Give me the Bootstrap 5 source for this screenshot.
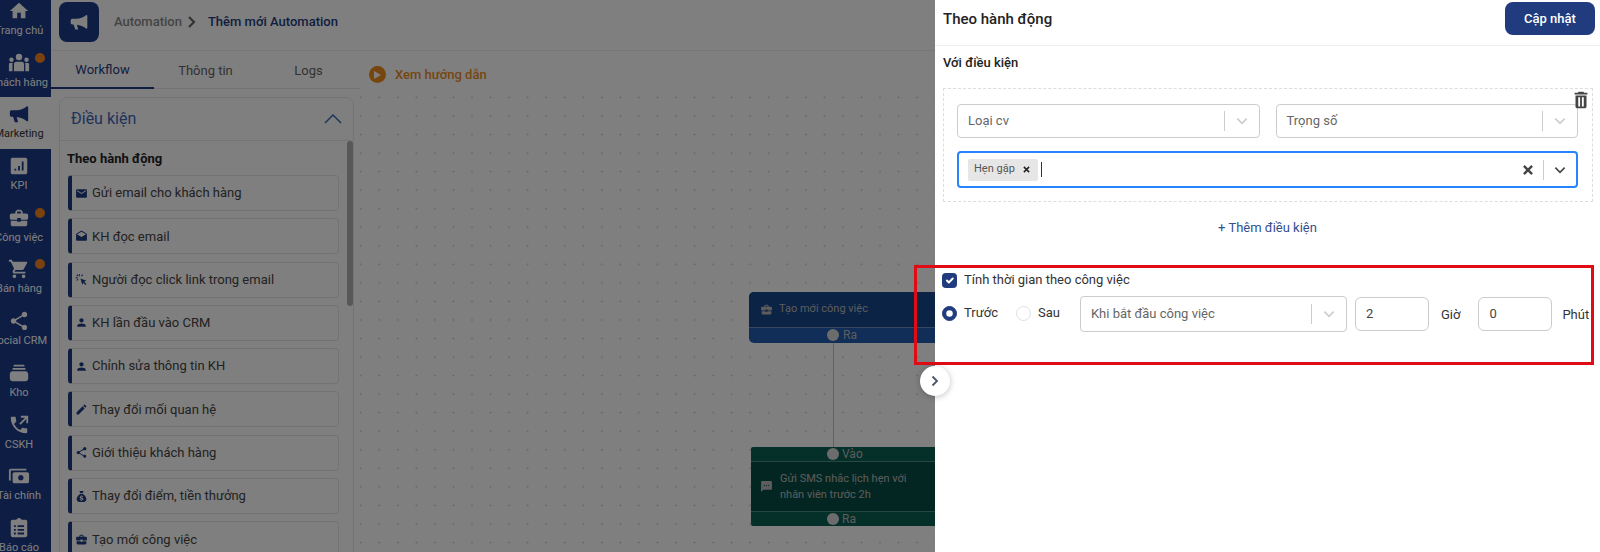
<!DOCTYPE html>
<html lang="vi">
<head>
    <meta charset="UTF-8">
    <meta name="viewport" content="width=device-width, initial-scale=1.0">
    <title>Thêm mới Automation</title>
    <link href="https://cdn.jsdelivr.net/npm/bootstrap@5.3.0/dist/css/bootstrap.min.css" rel="stylesheet">
    <style>
        body { font-family: Roboto, "Liberation Sans", sans-serif; font-size: 13px; color: #333; height: 552px; overflow: hidden; background: #fff; }
        svg.ico { fill: currentColor; display: block; flex: none; }
        .side-bar { width: 51px; flex: none; background: #1b3a88; color: #fff; overflow: hidden; }
        .side-list { margin-top: -6px; }
        .side-item { width: 51px; height: 51.7px; position: relative; padding: 6px 13px 0 0; font-size: 11px; line-height: 14px; white-space: nowrap; }
        .side-item svg { margin-bottom: 2px; }
        .side-box { width: 38px; display: flex; flex-direction: column; align-items: center; }
        .side-item.on { background: #fff; color: #1b3a88; }
        .side-item.on span { color: #333; }
        .side-dot { position: absolute; left: 35px; top: 7px; width: 10px; height: 10px; border-radius: 50%; background: #f5851f; }
        .top-head { height: 51px; border-bottom: 1px solid #eee; padding: 2px 0 0 8px; }
        .top-tile { width: 40px; height: 40px; border-radius: 8px; background: #1b3a88; color: #fff; }
        .crumb-a { color: #8a8a8a; font-weight: 500; margin-left: 15px; }
        .crumb-sep { margin: 0 11px 0 5px; }
        .crumb-b { color: #1f3c80; font-weight: 500; }
        .left-col { width: 309px; flex: none; }
        .tab-row { height: 38px; border-bottom: 1px solid #e6e6e6; }
        .tab-cell { width: 103px; height: 38px; display: flex; align-items: center; justify-content: center; color: #666; font-size: 13px; padding-top: 2px; }
        .tab-cell.on { color: #1f3c80; border-bottom: 2px solid #1f3c80; height: 38px; }
        .panel-box { width: 295px; height: 470px; margin: 8px 0 0 8px; border: 1px solid #e8e8e8; border-radius: 8px 8px 0 0; position: relative; overflow: hidden; }
        .panel-head { height: 43px; padding: 0 11px; border-bottom: 1px solid #e8e8e8; color: #3f66b8; font-size: 16px; }
        .panel-title { font-weight: 700; color: #222; margin: 10px 0 9px 7px; line-height: 15px; }
        .act-item { width: 271px; height: 36px; margin: 0 0 7.3px 8px; border: 1px solid #e6e6e6; border-left: 4px solid #1f3c80; border-radius: 4px; padding-left: 3px; gap: 4px; color: #444; }
        .act-item svg { color: #1f3c80; }
        .scroll-thumb { position: absolute; right: 0; top: 43px; width: 6px; height: 165px; background: #b0b0b0; border-radius: 3px; }
        .flow-canvas { position: relative; flex-grow: 1; height: 501px; padding-top: 40px; background-image: radial-gradient(circle, #c8c8c8 0.8px, transparent 1.1px); background-size: 18.55px 18.55px; background-position: 10px 0; background-clip: content-box; }
        .guide-row { position: absolute; left: 9px; top: 14px; color: #ee8c1e; font-weight: 500; gap: 9px; }
        .guide-dot { width: 17px; height: 17px; border-radius: 50%; background: #ee8c1e; }
        .flow-node { position: absolute; color: #bbb; overflow: hidden; font-size: 11px; }
        .node-one { left: 389px; top: 241px; width: 240px; height: 51px; background: #205cb0; border-radius: 5px; }
        .node-two { left: 391px; top: 396px; width: 240px; height: 79px; background: #0a6053; border-radius: 2px; }
        .node-body { background: #174688; height: 36px; padding-left: 11px; gap: 6px; border-bottom: 1px solid #6f8fc0; }
        .node-two .node-body { background: #084d44; height: 51px; padding-left: 9px; border-top: 1px solid #4f9085; border-bottom: 1px solid #4f9085; gap: 7px; line-height: 16px; }
        .node-foot { height: 14px; font-size: 12px; line-height: 14px; padding-left: 78px; gap: 4px; }
        .node-two .node-foot { padding-left: 76px; gap: 3px; }
        .node-pin { width: 12px; height: 12px; border-radius: 50%; background: #d8d8d8; flex: none; }
        .node-line { position: absolute; left: 473px; top: 291px; width: 1px; height: 105px; background: #c4c4c4; }
        .dim-layer { position: absolute; left: 0; top: 0; width: 935px; height: 552px; background: rgba(0,0,0,.5); }
        .right-drawer { position: absolute; left: 935px; top: 0; width: 665px; height: 552px; background: #fff; }
        .drawer-head { height: 46px; padding: 0 5px 10px 8px; border-bottom: 1px solid #eee; }
        .drawer-title { font-size: 15px; font-weight: 500; color: #222; margin-top: 10px; line-height: 18px; }
        .save-btn { width: 90px; height: 33px; margin-top: 2px; background: #203c7e; color: #fff; border-radius: 8px; font-size: 13px; font-weight: 500; padding: 0; border: 0; }
        .sub-title { font-weight: 500; color: #222; margin: 9px 0 0 8px; line-height: 15px; }
        .cond-box { margin: 18px 7px 0 8px; height: 114px; border: 1px dashed #ddd; padding: 15px 14px 0 13px; position: relative; }
        .trash-btn { position: absolute; right: 0; top: 0; color: #444; }
        .pick-box { height: 34px; border: 1px solid #ccc; border-radius: 4px; padding-left: 10px; color: #666; background: #fff; }
        .pick-half { flex: 1 1 0; }
        .pick-val { flex-grow: 1; }
        .pick-sep { width: 1px; height: 20px; background: #ccc; }
        .pick-arrow { width: 34px; display: flex; justify-content: center; color: #ccc; }
        .multi-box { height: 37px; margin-top: 13px; border: 2px solid #2684ff; border-radius: 4px; padding-left: 9px; }
        .multi-box .pick-arrow { width: 32px; color: #444; }
        .tag-chip { width: 70px; height: 22px; background: #e6e6e6; font-size: 11px; color: #555; padding-left: 6px; gap: 7px; border-radius: 2px; }
        .text-caret { width: 1px; height: 15px; background: #333; margin-left: 3px; }
        .add-cond { color: #33508f; text-align: center; margin-top: 18px; line-height: 16px; }
        .time-block { margin: 36px 0 0 7px; }
        .check-row { gap: 7px; height: 16px; color: #333; }
        .check-row .form-check-input, .radio-opt .form-check-input { width: 15px; height: 15px; margin: 0; flex: none; }
        .form-check-input:checked { background-color: #203c7e; border-color: #203c7e; }
        .time-row { margin-top: 7px; height: 36px; }
        .radio-opt { gap: 7px; }
        .radio-late { margin-left: 18px; }
        .sel-time { width: 267px; height: 36px; margin: 2px 0 0 20px; }
        .num-box { width: 74px; height: 34px; border-radius: 6px; font-size: 13px; padding: 0 10px; color: #444; border-color: #ccc; margin-top: 1px; }
        .num-first { margin-left: 8px; }
        .num-next { margin-left: 6px; }
        .unit-one { margin: 3px 12px 0; }
        .unit-two { margin: 3px 0 0 10px; }
        .mark-box { position: absolute; left: 914px; top: 265px; width: 680px; height: 100px; border: 3px solid #e00b14; pointer-events: none; }
        .fold-btn { position: absolute; left: 920px; top: 366px; width: 30px; height: 30px; border-radius: 50%; background: #fff; box-shadow: 0 1px 6px rgba(0,0,0,.25); color: #4a5568; }
    </style>
</head>
<body>
    <svg width="0" height="0" class="position-absolute">
        <defs>
            <symbol id="i-home" viewBox="0 0 24 24"><path d="M10 20v-6h4v6h5v-8h3L12 3 2 12h3v8z"/></symbol>
            <symbol id="i-group" viewBox="0 0 24 24"><circle cx="12" cy="5.500" r="3.500"/><circle cx="3.800" cy="8.500" r="2.400"/><circle cx="20.200" cy="8.500" r="2.400"/><path d="M9 10.500h6c1.700 0 2.500 1.300 2.500 3v7.500h-11v-7.500c0-1.700.8-3 2.500-3zM2 12h2.500c.4 0 .6.1.8.300-.3.500-.4 1-.4 1.700v7H1v-7c0-1.100.2-2 1-2zM19.500 12H22c.8 0 1 .9 1 2v7h-4.100v-7c0-.7-.1-1.200-.4-1.700.2-.2.4-.3.9-.3z"/></symbol>
            <symbol id="i-horn" viewBox="0 0 24 24"><path d="M21 3.500c.6 0 1 .4 1 1v14.500c0 .6-.4 1-1 1-.3 0-.5-.1-.7-.3C17.500 17.500 13 15.500 9.500 15.300L11 21H7.500L5.500 15H4c-1.100 0-2-.9-2-2v-3c0-1.100.9-2 2-2h5c4 0 8.500-1.800 11.300-4.200.2-.2.4-.3.7-.3z"/></symbol>
            <symbol id="i-kpi" viewBox="0 0 24 24"><path fill-rule="evenodd" d="M5 3h14c1.100 0 2 .9 2 2v14c0 1.100-.9 2-2 2H5c-1.100 0-2-.9-2-2V5c0-1.100.9-2 2-2zm2 12v2h2v-2H7zm4-3v5h2v-5h-2zm4-5v10h2V7h-2z"/></symbol>
            <symbol id="i-work" viewBox="0 0 24 24"><path d="M10 16v-1H3.010L3 19c0 1.110.89 2 2 2h14c1.110 0 2-.89 2-2v-4h-7v1h-4zm10-9h-4.010V5l-2-2h-4l-2 2v2H4c-1.100 0-2 .9-2 2v3c0 1.110.89 2 2 2h6v-2h4v2h6c1.100 0 2-.9 2-2V9c0-1.100-.9-2-2-2zm-6 0h-4V5h4v2z"/></symbol>
            <symbol id="i-cart" viewBox="0 0 24 24"><path d="M7 18c-1.100 0-1.990.9-1.990 2S5.900 22 7 22s2-.9 2-2-.9-2-2-2zM1 2v2h2l3.600 7.590-1.350 2.450c-.16.28-.25.61-.25.96 0 1.100.9 2 2 2h12v-2H7.420c-.14 0-.25-.11-.25-.25l.03-.12.9-1.630h7.450c.75 0 1.410-.41 1.750-1.030l3.580-6.490c.08-.14.12-.31.12-.48 0-.55-.45-1-1-1H5.210l-.94-2H1zm16 16c-1.100 0-1.990.9-1.990 2s.89 2 1.990 2 2-.9 2-2-.9-2-2-2z"/></symbol>
            <symbol id="i-share" viewBox="0 0 24 24"><path d="M18 16.080c-.76 0-1.440.3-1.960.77L8.910 12.700c.05-.23.09-.46.09-.7s-.04-.47-.09-.7l7.050-4.110c.54.5 1.250.81 2.040.81 1.660 0 3-1.340 3-3s-1.340-3-3-3-3 1.340-3 3c0 .24.04.47.09.7L8.040 9.810C7.500 9.310 6.790 9 6 9c-1.660 0-3 1.340-3 3s1.340 3 3 3c.79 0 1.500-.31 2.040-.81l7.120 4.160c-.05.21-.08.43-.08.65 0 1.610 1.310 2.920 2.920 2.920 1.610 0 2.920-1.310 2.920-2.920s-1.310-2.920-2.920-2.920z"/></symbol>
            <symbol id="i-stock" viewBox="0 0 24 24"><path d="M7 3h10a1 1 0 0 1 1 1v1H6V4a1 1 0 0 1 1-1zM5 6.500h14v2H5zM5 10h14c1.700 0 3 1.300 3 3v5c0 1.700-1.300 3-3 3H5c-1.700 0-3-1.300-3-3v-5c0-1.700 1.300-3 3-3z"/></symbol>
            <symbol id="i-call" viewBox="0 0 24 24"><path d="M20 15.500c-1.250 0-2.450-.2-3.570-.57-.35-.11-.74-.03-1.020.24l-2.200 2.200c-2.830-1.440-5.150-3.750-6.590-6.590l2.200-2.210c.28-.26.36-.65.25-1C8.700 6.450 8.500 5.250 8.500 4c0-.55-.45-1-1-1H4c-.55 0-1 .45-1 1 0 9.390 7.610 17 17 17 .55 0 1-.45 1-1v-3.500c0-.55-.45-1-1-1z"/><path d="M14 2v2h4.600l-6.300 6.300 1.400 1.400L20 5.400V10h2V2z"/></symbol>
            <symbol id="i-money" viewBox="0 0 24 24"><g transform="rotate(180 12 12)"><path d="M19 14V6c0-1.100-.9-2-2-2H3c-1.100 0-2 .9-2 2v8c0 1.100.9 2 2 2h14c1.100 0 2-.9 2-2zm-9-1c-1.660 0-3-1.340-3-3s1.340-3 3-3 3 1.340 3 3-1.340 3-3 3zm13-6v11c0 1.100-.9 2-2 2H4v-2h17V7h2z"/></g></symbol>
            <symbol id="i-report" viewBox="0 0 24 24"><path fill-rule="evenodd" d="M19 3h-4.180C14.400 1.840 13.300 1 12 1c-1.300 0-2.400.84-2.820 2H5c-1.100 0-2 .9-2 2v15c0 1.100.9 2 2 2h14c1.100 0 2-.9 2-2V5c0-1.100-.9-2-2-2zM6.500 9v2h2V9h-2zm4 0v2h7V9h-7zm-4 4v2h2v-2h-2zm4 0v2h7v-2h-7zm-4 4v2h2v-2h-2zm4 0v2h7v-2h-7z"/></symbol>
            <symbol id="i-mail" viewBox="0 0 24 24"><path d="M20 4H4c-1.100 0-1.990.9-1.990 2L2 18c0 1.100.9 2 2 2h16c1.100 0 2-.9 2-2V6c0-1.100-.9-2-2-2zm0 4l-8 5-8-5V6l8 5 8-5v2z"/></symbol>
            <symbol id="i-read" viewBox="0 0 24 24"><path d="M21.990 8c0-.72-.37-1.350-.94-1.700L12 1 2.950 6.300C2.380 6.650 2 7.280 2 8v10c0 1.100.9 2 2 2h16c1.100 0 2-.9 2-2l-.01-10zM12 13L3.740 7.840 12 3l8.260 4.840L12 13z"/></symbol>
            <symbol id="i-click" viewBox="0 0 24 24"><path d="M10 10l11 4.500-4.200 1.700 4.200 4.200-1.600 1.600-4.200-4.200L13.500 22z"/><path d="M7 2h1.800v4H7zM1 8h4v1.800H1zM2.500 3.800l1.300-1.300 2.700 2.700-1.300 1.300zM11 5.200l2.700-2.700 1.300 1.300-2.700 2.700zM3.800 14.500l-1.300-1.300 2.700-2.700 1.300 1.300z"/></symbol>
            <symbol id="i-user" viewBox="0 0 24 24"><path d="M12 12c2.210 0 4-1.790 4-4s-1.790-4-4-4-4 1.790-4 4 1.790 4 4 4zm0 2c-2.670 0-8 1.340-8 4v2h16v-2c0-2.660-5.330-4-8-4z"/></symbol>
            <symbol id="i-edit" viewBox="0 0 24 24"><path d="M3 17.250V21h3.750L17.810 9.940l-3.750-3.750L3 17.250zM20.710 7.040c.39-.39.39-1.020 0-1.410l-2.340-2.340c-.39-.39-1.020-.39-1.410 0l-1.830 1.830 3.750 3.750 1.830-1.830z"/></symbol>
            <symbol id="i-bag" viewBox="0 0 24 24"><path fill-rule="evenodd" d="M8 2h8l-2 4h-4zM9.500 7.500h5C18 9.500 21 13.500 21 17c0 2.500-1.800 5-5 5H8c-3.200 0-5-2.500-5-5 0-3.500 3-7.500 6.500-9.500zM11 10v1.200c-1.300.3-2.200 1.200-2.200 2.400 0 1.500 1.200 2.100 2.700 2.500 1.200.3 1.500.6 1.500 1 0 .4-.4.8-1.200.8-.9 0-1.300-.4-1.400-1H8.700c.1 1.300 1 2 2.300 2.300V20h2v-1.200c1.300-.3 2.200-1.100 2.200-2.300 0-1.700-1.400-2.300-2.700-2.600-1.300-.3-1.500-.6-1.500-1 0-.5.4-.8 1.100-.8.7 0 1.100.3 1.200.9h1.700c-.1-1.100-.8-1.900-2-2.200V10z"/></symbol>
            <symbol id="i-sms" viewBox="0 0 24 24"><path d="M20 2H4c-1.100 0-1.990.9-1.990 2L2 22l4-4h14c1.100 0 2-.9 2-2V4c0-1.100-.9-2-2-2zM9 11H7V9h2v2zm4 0h-2V9h2v2zm4 0h-2V9h2v2z"/></symbol>
            <symbol id="i-trash" viewBox="0 0 24 24"><path fill-rule="evenodd" d="M6 19c0 1.100.9 2 2 2h8c1.100 0 2-.9 2-2V7H6v12zm3-10h2v10H9V9zm4 0h2v10h-2V9zM19 4h-3.500l-1-1h-5l-1 1H5v2h14V4z"/></symbol>
            <symbol id="i-down" viewBox="0 0 24 24"><path d="M5 8.500l7 7 7-7" fill="none" stroke="currentColor" stroke-width="2.400"/></symbol>
            <symbol id="i-close" viewBox="0 0 24 24"><path d="M5 5l14 14M19 5L5 19" fill="none" stroke="currentColor" stroke-width="4"/></symbol>
        </defs>
    </svg>

    <div class="d-flex">
        <div class="side-bar">
            <div class="side-list">
                <div class="side-item"><div class="side-box"><svg class="ico" width="22" height="22"><use href="#i-home"/></svg><span>Trang chủ</span></div></div>
                <div class="side-item"><i class="side-dot"></i><div class="side-box"><svg class="ico" width="22" height="22"><use href="#i-group"/></svg><span>Khách hàng</span></div></div>
                <div class="side-item on"><div class="side-box"><svg class="ico" width="22" height="22"><use href="#i-horn"/></svg><span>Marketing</span></div></div>
                <div class="side-item"><div class="side-box"><svg class="ico" width="22" height="22"><use href="#i-kpi"/></svg><span>KPI</span></div></div>
                <div class="side-item"><i class="side-dot"></i><div class="side-box"><svg class="ico" width="22" height="22"><use href="#i-work"/></svg><span>Công việc</span></div></div>
                <div class="side-item"><i class="side-dot"></i><div class="side-box"><svg class="ico" width="22" height="22"><use href="#i-cart"/></svg><span>Bán hàng</span></div></div>
                <div class="side-item"><div class="side-box"><svg class="ico" width="22" height="22"><use href="#i-share"/></svg><span>Social CRM</span></div></div>
                <div class="side-item"><div class="side-box"><svg class="ico" width="22" height="22"><use href="#i-stock"/></svg><span>Kho</span></div></div>
                <div class="side-item"><div class="side-box"><svg class="ico" width="22" height="22"><use href="#i-call"/></svg><span>CSKH</span></div></div>
                <div class="side-item"><div class="side-box"><svg class="ico" width="22" height="22"><use href="#i-money"/></svg><span>Tài chính</span></div></div>
                <div class="side-item"><div class="side-box"><svg class="ico" width="22" height="22"><use href="#i-report"/></svg><span>Báo cáo</span></div></div>
            </div>
        </div>

        <div class="flex-grow-1">
            <div class="top-head d-flex">
                <div class="top-tile d-flex align-items-center justify-content-center"><svg class="ico" width="20" height="20"><use href="#i-horn"/></svg></div>
                <div class="d-flex align-items-center pb-2">
                    <span class="crumb-a">Automation</span>
                    <svg class="ico crumb-sep" width="10" height="12" viewBox="0 0 10 12"><path d="M2 1l5 5-5 5" fill="none" stroke="#666" stroke-width="2.200"/></svg>
                    <span class="crumb-b">Thêm mới Automation</span>
                </div>
            </div>
            <div class="d-flex">
                <div class="left-col">
                    <div class="tab-row d-flex">
                        <div class="tab-cell on">Workflow</div>
                        <div class="tab-cell">Thông tin</div>
                        <div class="tab-cell">Logs</div>
                    </div>
                    <div class="panel-box">
                        <div class="panel-head d-flex align-items-center justify-content-between">
                            <span>Điều kiện</span>
                            <svg class="ico" width="18" height="12" viewBox="0 0 18 12"><path d="M1 10l8-8 8 8" fill="none" stroke="#3f66b8" stroke-width="1.500"/></svg>
                        </div>
                        <i class="scroll-thumb"></i>
                        <div class="panel-title">Theo hành động</div>
                        <div class="act-item d-flex align-items-center"><svg class="ico" width="13" height="13"><use href="#i-mail"/></svg>Gửi email cho khách hàng</div>
                        <div class="act-item d-flex align-items-center"><svg class="ico" width="13" height="13"><use href="#i-read"/></svg>KH đọc email</div>
                        <div class="act-item d-flex align-items-center"><svg class="ico" width="13" height="13"><use href="#i-click"/></svg>Người đọc click link trong email</div>
                        <div class="act-item d-flex align-items-center"><svg class="ico" width="13" height="13"><use href="#i-user"/></svg>KH lần đầu vào CRM</div>
                        <div class="act-item d-flex align-items-center"><svg class="ico" width="13" height="13"><use href="#i-user"/></svg>Chỉnh sửa thông tin KH</div>
                        <div class="act-item d-flex align-items-center"><svg class="ico" width="13" height="13"><use href="#i-edit"/></svg>Thay đổi mối quan hệ</div>
                        <div class="act-item d-flex align-items-center"><svg class="ico" width="13" height="13"><use href="#i-share"/></svg>Giới thiệu khách hàng</div>
                        <div class="act-item d-flex align-items-center"><svg class="ico" width="13" height="13"><use href="#i-bag"/></svg>Thay đổi điểm, tiền thưởng</div>
                        <div class="act-item d-flex align-items-center"><svg class="ico" width="13" height="13"><use href="#i-work"/></svg>Tạo mới công việc</div>
                    </div>
                </div>
                <div class="flow-canvas">
                    <div class="guide-row d-flex align-items-center">
                        <div class="guide-dot d-flex align-items-center justify-content-center"><svg width="7" height="8" viewBox="0 0 7 8"><path d="M0 0l7 4-7 4z" fill="#fff"/></svg></div>
                        <span>Xem hướng dẫn</span>
                    </div>
                    <div class="node-line"></div>
                    <div class="flow-node node-one">
                        <div class="node-body d-flex align-items-center"><svg class="ico" width="13" height="13"><use href="#i-work"/></svg>Tạo mới công việc</div>
                        <div class="node-foot d-flex align-items-center"><i class="node-pin"></i>Ra</div>
                    </div>
                    <div class="flow-node node-two">
                        <div class="node-foot d-flex align-items-center"><i class="node-pin"></i>Vào</div>
                        <div class="node-body d-flex align-items-center"><svg class="ico" width="13" height="13"><use href="#i-sms"/></svg><span>Gửi SMS nhắc lịch hẹn với<br>nhân viên trước 2h</span></div>
                        <div class="node-foot d-flex align-items-center"><i class="node-pin"></i>Ra</div>
                    </div>
                </div>
            </div>
        </div>
    </div>

    <div class="dim-layer"></div>

    <div class="right-drawer">
        <div class="drawer-head d-flex align-items-start justify-content-between">
            <span class="drawer-title">Theo hành động</span>
            <button class="btn save-btn" type="button">Cập nhật</button>
        </div>
        <div class="sub-title">Với điều kiện</div>
        <div class="cond-box">
            <svg class="ico trash-btn" width="22" height="22"><use href="#i-trash"/></svg>
            <div class="d-flex gap-3">
                <div class="pick-box pick-half d-flex align-items-center"><span class="pick-val">Loại cv</span><i class="pick-sep"></i><span class="pick-arrow"><svg class="ico" width="16" height="16"><use href="#i-down"/></svg></span></div>
                <div class="pick-box pick-half d-flex align-items-center"><span class="pick-val">Trọng số</span><i class="pick-sep"></i><span class="pick-arrow"><svg class="ico" width="16" height="16"><use href="#i-down"/></svg></span></div>
            </div>
            <div class="multi-box d-flex align-items-center">
                <div class="tag-chip d-flex align-items-center">Hẹn gặp <svg class="ico" width="9" height="9" style="color:#222"><use href="#i-close"/></svg></div>
                <i class="text-caret"></i>
                <span class="flex-grow-1"></span>
                <svg class="ico me-2" width="14" height="14" style="color:#444"><use href="#i-close"/></svg>
                <i class="pick-sep"></i>
                <span class="pick-arrow"><svg class="ico" width="16" height="16"><use href="#i-down"/></svg></span>
            </div>
        </div>
        <div class="add-cond">+ Thêm điều kiện</div>
        <div class="time-block">
            <label class="check-row d-flex align-items-center"><input class="form-check-input" type="checkbox" checked>Tính thời gian theo công việc</label>
            <div class="time-row d-flex align-items-center">
                <label class="radio-opt d-flex align-items-center"><input class="form-check-input" type="radio" name="mocTg" checked>Trước</label>
                <label class="radio-opt radio-late d-flex align-items-center"><input class="form-check-input" type="radio" name="mocTg">Sau</label>
                <div class="pick-box sel-time d-flex align-items-center"><span class="pick-val">Khi bắt đầu công việc</span><i class="pick-sep"></i><span class="pick-arrow"><svg class="ico" width="16" height="16"><use href="#i-down"/></svg></span></div>
                <input class="form-control num-box num-first" type="text" value="2">
                <span class="unit-one">Giờ</span>
                <input class="form-control num-box num-next" type="text" value="0">
                <span class="unit-two">Phút</span>
            </div>
        </div>
    </div>

    <div class="mark-box"></div>
    <div class="fold-btn d-flex align-items-center justify-content-center"><svg class="ico" width="8" height="12" viewBox="0 0 8 12"><path d="M1.500 1.500l4.500 4.500-4.500 4.500" fill="none" stroke="currentColor" stroke-width="1.800"/></svg></div>
</body>
</html>
